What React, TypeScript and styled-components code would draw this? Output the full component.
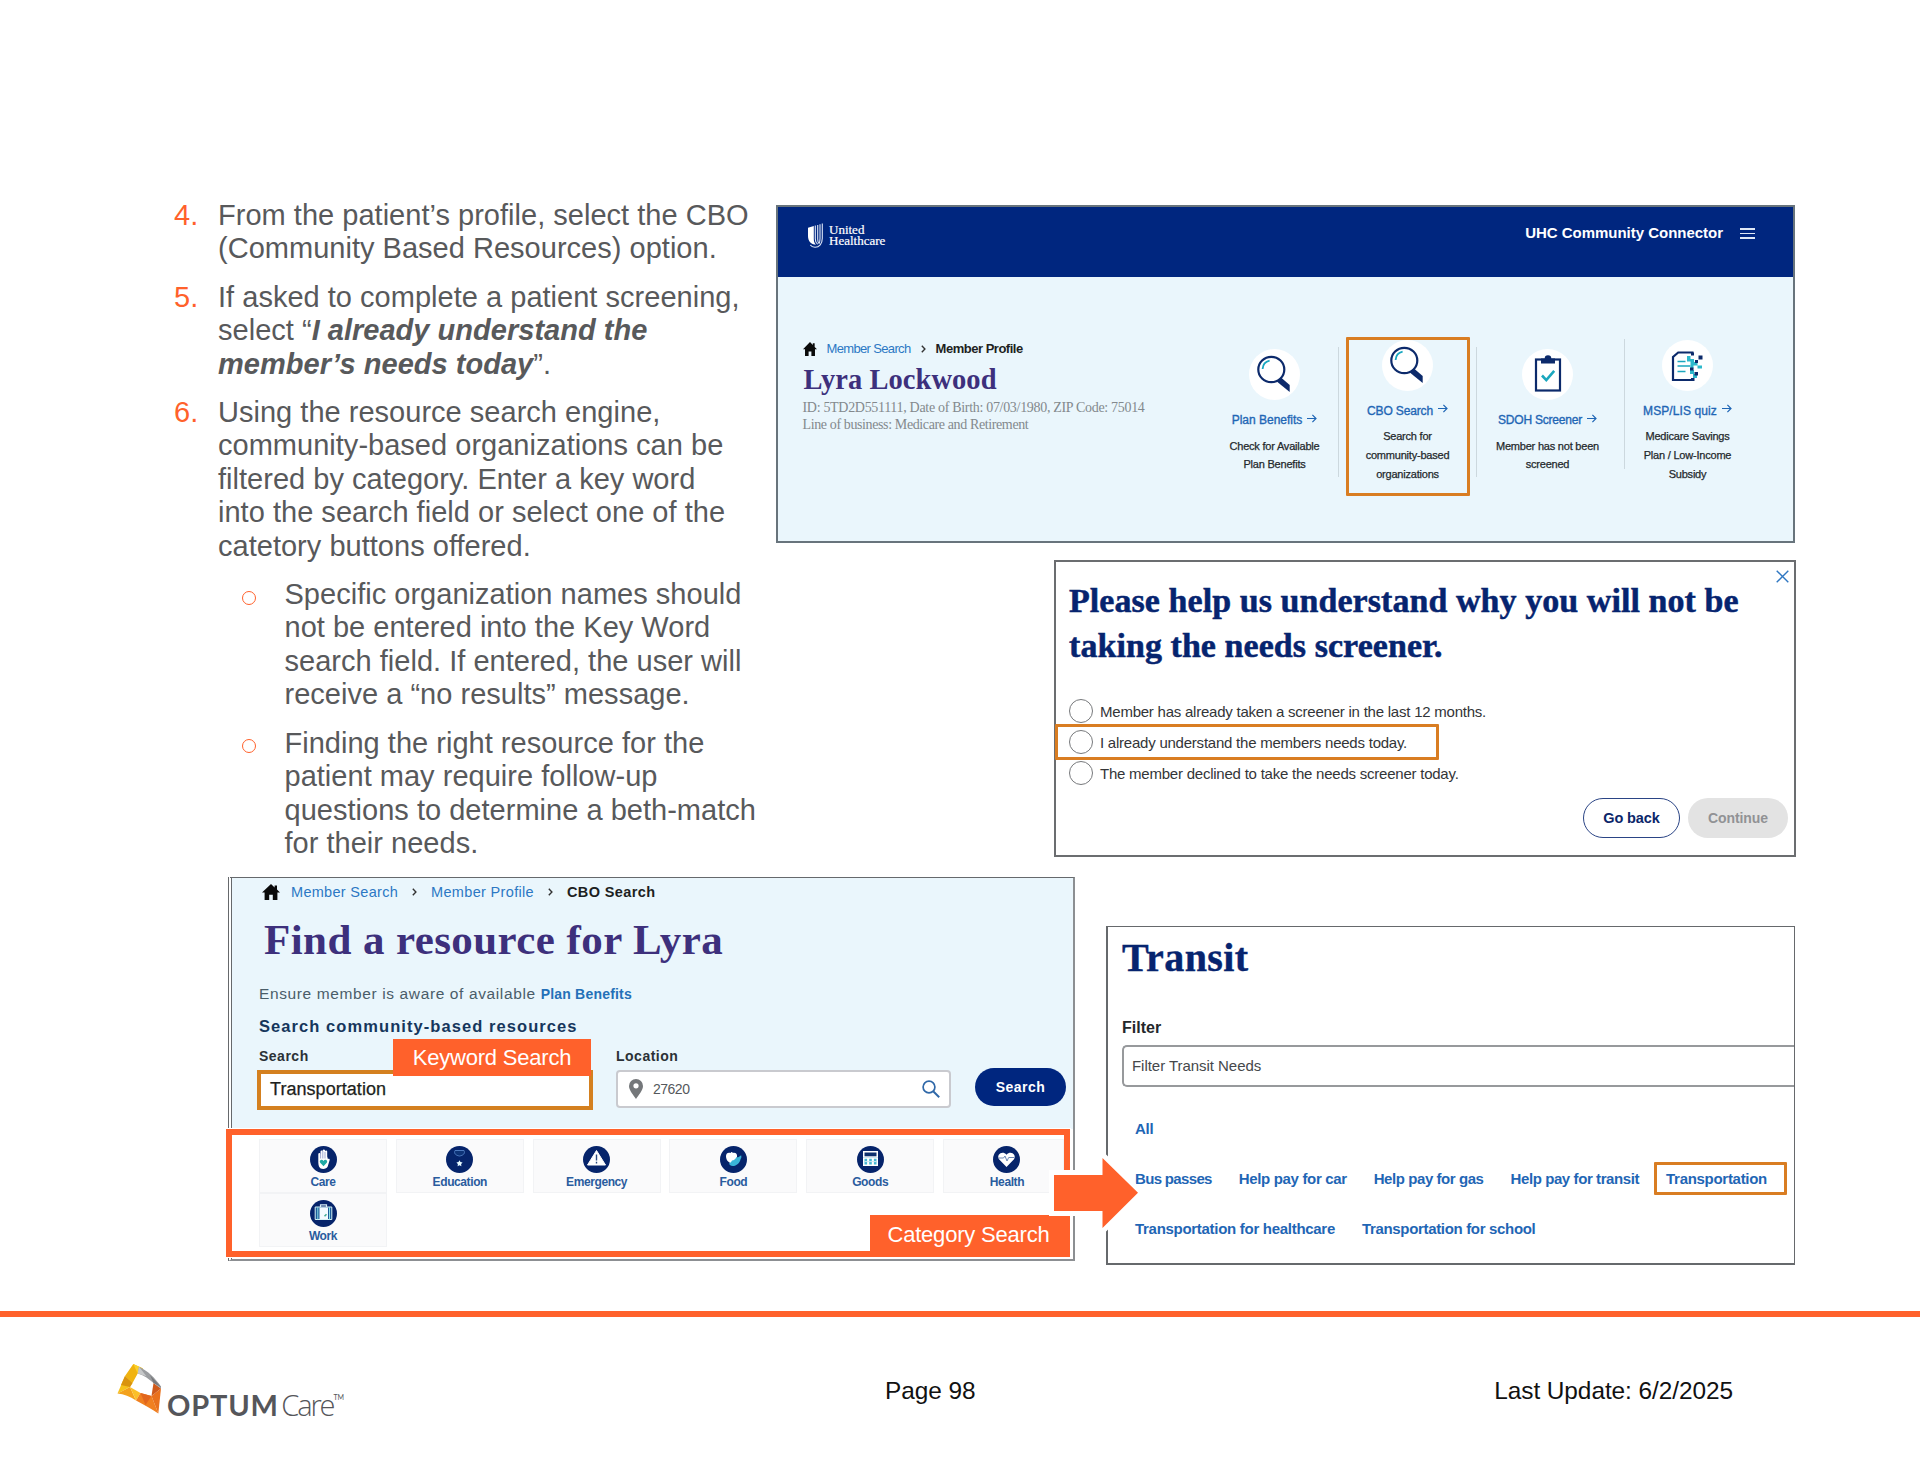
import React from 'react';
import styled, { createGlobalStyle, css } from 'styled-components';

const sans = '"Liberation Sans", Arial, sans-serif';
const serif = '"Liberation Serif", "Times New Roman", serif';

const color = {
  orange: '#ff612b',
  callout: '#d97d22',
  navy: '#00267f',
  heading: '#06246f',
  purple: '#3d307c',
  link: '#1f66b5',
  sky: '#eaf6fc',
  body: '#58595b',
};

const GlobalStyle = createGlobalStyle`
  * { box-sizing: border-box; }
  body { margin: 0; background: #fff; font-family: ${sans}; }
  p, h1, h2, ol, ul { margin: 0; padding: 0; font-weight: inherit; list-style: none; }
`;

const Page = styled.main`
  width: 1920px;
  height: 1484px;
  display: flex;
  flex-direction: column;
  background: #fff;
  overflow: hidden;
`;

const TopRow = styled.div`
  display: flex;
  height: 877px;
  padding-left: 174px;
`;

/* ---------- instructions ---------- */

const Steps = styled.ol`
  display: flex;
  flex-direction: column;
  gap: 15px;
  width: 602px;
  padding-top: 199px;
  font-size: 29px;
  line-height: 33.4px;
  letter-spacing: 0.02px;
  color: ${color.body};
`;

const Step = styled.li`
  display: grid;
  grid-template-columns: 44px 1fr;
`;

const StepNumber = styled.span`
  color: ${color.orange};
`;

const Line = styled.span`
  display: block;
  white-space: nowrap;
`;

const Strong = styled.strong`
  font-style: italic;
`;

const SubSteps = styled.ul`
  display: flex;
  flex-direction: column;
  gap: 15px;
  padding-left: 68px;
`;

const SubStep = styled.li`
  display: grid;
  grid-template-columns: 42.5px 1fr;
`;

const Bullet = styled.span`
  width: 14px;
  height: 14px;
  margin-top: 12.5px;
  border: 1.5px solid ${color.orange};
  border-radius: 50%;
`;

/* ---------- shared ---------- */

const Shots = styled.div`
  display: flex;
  flex-direction: column;
  align-items: flex-end;
  gap: 17px;
  width: 1020px;
  padding-top: 205px;
`;

const Trail = styled.nav<{ $gap: number }>`
  display: flex;
  align-items: center;
  gap: ${(p) => p.$gap}px;
  height: 16px;
`;

const Crumb = styled.span<{ $size: number; $spacing: number; $current?: boolean }>`
  font-size: ${(p) => p.$size}px;
  line-height: 16px;
  letter-spacing: ${(p) => p.$spacing}px;
  white-space: nowrap;
  color: ${(p) => (p.$current ? '#1d1f22' : '#2c78c4')};
  font-weight: ${(p) => (p.$current ? 700 : 400)};
`;

const callout = css`
  position: relative;
  &::after {
    content: '';
    position: absolute;
    border: 3px solid ${color.callout};
    border-radius: 1px;
    pointer-events: none;
  }
`;

/* ---------- member profile ---------- */

const ProfilePanel = styled.section`
  width: 1019px;
  height: 338px;
  margin-right: 1px;
  border: 2px solid #68747c;
  background: ${color.sky};
`;

const ProfileHeader = styled.header`
  display: flex;
  align-items: flex-start;
  height: 70px;
  padding: 16px 38px 0 30px;
  background: ${color.navy};
  color: #fff;
`;

const Brand = styled.div`
  display: flex;
  gap: 6px;
`;

const BrandName = styled.div`
  padding-top: 1px;
  font: 400 13px/11.4px ${serif};
  -webkit-text-stroke: 0.2px #fff;
`;

const AppName = styled.div`
  margin: 0.5px 17px 0 auto;
  font-size: 15px;
  font-weight: 700;
  line-height: 18px;
  letter-spacing: -0.02px;
`;

const MenuIcon = styled.div`
  display: flex;
  flex-direction: column;
  gap: 3px;
  width: 15px;
  margin-top: 5px;
  i {
    height: 1.5px;
    background: #dfe8f6;
  }
`;

const ProfileBody = styled.div`
  display: flex;
  justify-content: space-between;
  padding-left: 24.5px;
`;

const Identity = styled.div`
  padding-top: 64px;
`;

const MemberName = styled.h1`
  margin: 6px 0 3px 1px;
  font: 700 28.5px/34px ${serif};
  letter-spacing: 0.05px;
  color: ${color.purple};
`;

const Detail = styled.p<{ $spacing: number }>`
  font: 400 14px/16.5px ${serif};
  letter-spacing: ${(p) => p.$spacing}px;
  white-space: nowrap;
  color: #83898d;
`;

const Actions = styled.div`
  display: flex;
  align-items: flex-start;
  padding: 62px 43px 0 0;
`;

const Divider = styled.span<{ $rise?: number }>`
  width: 1px;
  height: 130px;
  margin-top: ${(p) => 8 - (p.$rise ?? 0)}px;
  background: #ccd8de;
`;

const Action = styled.div<{ $width: number; $drop: number; $shift?: number; $marked?: boolean }>`
  display: flex;
  flex-direction: column;
  align-items: center;
  width: ${(p) => p.$width}px;
  padding-top: ${(p) => p.$drop}px;
  padding-right: ${(p) => p.$shift ?? 0}px;
  ${(p) =>
    p.$marked &&
    css`
      ${callout}
      &::after {
        inset: -2px 6px -12px 7px;
      }
    `}
`;

const Disc = styled.div`
  width: 51px;
  height: 51px;
  border-radius: 50%;
  background: #fff;
  svg {
    display: block;
  }
`;

const ActionLink = styled.div<{ $spacing: number }>`
  display: flex;
  align-items: center;
  gap: 5px;
  margin-top: 12px;
  font-size: 12px;
  line-height: 16px;
  letter-spacing: ${(p) => p.$spacing}px;
  white-space: nowrap;
  color: ${color.link};
  -webkit-text-stroke: 0.35px ${color.link};
  svg {
    margin-top: -4px;
  }
`;

const ActionText = styled.p`
  margin-top: 8.7px;
  font-size: 11px;
  line-height: 18.8px;
  letter-spacing: -0.21px;
  text-align: center;
  color: #24292c;
  -webkit-text-stroke: 0.25px #24292c;
`;

/* ---------- screener dialog ---------- */

const Dialog = styled.section`
  position: relative;
  width: 742px;
  height: 297px;
  padding-top: 16px;
  border: 2px solid #6b6d70;
`;

const Close = styled.div`
  position: absolute;
  top: 8px;
  right: 5px;
  line-height: 0;
`;

const DialogTitle = styled.h2`
  margin: 0 0 27px 13px;
  font: 700 34px/45.3px ${serif};
  letter-spacing: 0.06px;
  color: ${color.heading};
  -webkit-text-stroke: 0.5px ${color.heading};
`;

const Choice = styled.div<{ $marked?: boolean }>`
  display: flex;
  align-items: center;
  gap: 7px;
  width: 383px;
  height: 31px;
  padding-left: 13px;
  font-size: 15px;
  letter-spacing: -0.23px;
  white-space: nowrap;
  color: #333538;
  ${(p) =>
    p.$marked &&
    css`
      ${callout}
      &::after {
        inset: -3px 0 -2px -1px;
      }
    `}
`;

const Radio = styled.span`
  flex: none;
  width: 24px;
  height: 24px;
  border: 1.5px solid #77797c;
  border-radius: 50%;
`;

const DialogButtons = styled.div`
  display: flex;
  justify-content: flex-end;
  gap: 8px;
  padding: 9px 6px 0 0;
`;

const Pill = styled.button<{ $kind: 'outline' | 'disabled' | 'primary'; $width: number }>`
  width: ${(p) => p.$width}px;
  height: ${(p) => (p.$kind === 'primary' ? 38 : 40)}px;
  padding: 0;
  border: ${(p) => (p.$kind === 'outline' ? '1px solid #2a4485' : '0')};
  border-radius: 20px;
  background: ${(p) => ({ outline: '#fff', disabled: '#e3e3e3', primary: color.navy })[p.$kind]};
  color: ${(p) => ({ outline: '#0b2669', disabled: '#919295', primary: '#fff' })[p.$kind]};
  font: 700 ${(p) => (p.$kind === 'outline' ? 14.5 : 14)}px/18px ${sans};
  letter-spacing: ${(p) => (p.$kind === 'primary' ? 0.5 : -0.1)}px;
`;

/* ---------- resource search ---------- */

const BottomRow = styled.div`
  display: flex;
  align-items: flex-start;
  height: 434px;
  padding-left: 228px;
`;

const ResourcePanel = styled.section`
  position: relative;
  z-index: 1;
  width: 847px;
  height: 384px;
  border: solid #66696c;
  border-width: 1px 2px 2px 4px;
  border-left-style: double;
  border-right-color: #8c8f92;
  border-bottom-color: #8c8f92;
`;

const ResourceTop = styled.div`
  height: 251px;
  padding: 6px 0 0 27px;
  background: ${color.sky};
`;

const TrailIndent = styled.div`
  padding-left: 3px;
  svg:first-child {
    margin-right: -3px;
  }
`;

const ResourceTitle = styled.h1`
  margin: 15px 0 20px 5px;
  font: 700 43px/50px ${serif};
  letter-spacing: 0.42px;
  color: ${color.purple};
`;

const Reminder = styled.p`
  font-size: 15.5px;
  line-height: 18px;
  letter-spacing: 0.62px;
  color: #4a5d69;
`;

const InlineLink = styled.a`
  font-size: 14px;
  font-weight: 700;
  letter-spacing: 0.2px;
  color: #2470b8;
`;

const FormTitle = styled.p`
  margin: 14px 0 12.5px;
  font-size: 16.5px;
  font-weight: 700;
  line-height: 18px;
  letter-spacing: 1.07px;
  color: #16365c;
`;

const Form = styled.div`
  display: flex;
  align-items: flex-start;
`;

const Field = styled.div<{ $width: number }>`
  position: relative;
  width: ${(p) => p.$width}px;
`;

const Label = styled.div`
  margin-bottom: 6px;
  font-size: 14px;
  font-weight: 700;
  line-height: 16px;
  letter-spacing: 0.5px;
  color: #2b3136;
`;

const KeywordInput = styled.div`
  display: flex;
  align-items: center;
  width: 336px;
  height: 40px;
  margin-left: -2px;
  padding-left: 9px;
  border: 4px solid #d4801f;
  background: #fff;
  font-size: 18px;
  letter-spacing: 0.05px;
  color: #1d1f20;
  -webkit-text-stroke: 0.25px #1d1f20;
`;

const LocationInput = styled.div`
  display: flex;
  align-items: center;
  width: 335px;
  height: 38px;
  padding: 0 9px 0 11px;
  border: 2px solid #c9cacf;
  border-radius: 4px;
  background: #fff;
  font-size: 14px;
  letter-spacing: -0.5px;
  color: #55585c;
  span {
    flex: 1;
    padding-left: 10px;
  }
`;

const ButtonSlot = styled.div`
  padding: 20px 0 0 24px;
`;

const Tag = styled.div<{ $width: number; $height: number }>`
  position: absolute;
  display: flex;
  align-items: center;
  justify-content: center;
  width: ${(p) => p.$width}px;
  height: ${(p) => p.$height}px;
  background: ${color.orange};
  color: #fff;
  font-size: 22px;
  letter-spacing: -0.2px;
  white-space: nowrap;
`;

const KeywordTag = styled(Tag)`
  top: -9px;
  left: 134px;
  padding-top: 2px;
`;

const CategoryTag = styled(Tag)`
  right: -6px;
  bottom: -6px;
  padding: 0 3px 2px 0;
`;

const Categories = styled.div`
  position: relative;
  display: grid;
  grid-template-columns: repeat(6, 128px);
  grid-auto-rows: 54px;
  column-gap: 8.8px;
  width: 844px;
  height: 128px;
  margin-left: -6px;
  padding: 4px 0 0 27px;
  border: 6px solid ${color.orange};
  outline: 1px solid #fff;
  background: #fff;
`;

const Category = styled.div<{ $clipped?: boolean }>`
  display: flex;
  flex-direction: column;
  align-items: center;
  gap: 2px;
  width: ${(p) => (p.$clipped ? 121 : 128)}px;
  padding: 6px 0 0 ${(p) => (p.$clipped ? 7 : 0)}px;
  border: 1px solid #f2f3f5;
  background: #fafafb;
  font-size: 12px;
  font-weight: 700;
  line-height: 14px;
  letter-spacing: -0.4px;
  color: #2a5c9e;
  svg {
    display: block;
  }
`;

const Arrow = styled.svg`
  position: absolute;
  left: 812px;
  top: 269px;
`;

/* ---------- transit ---------- */

const TransitPanel = styled.section`
  width: 689px;
  height: 339px;
  margin: 49px 0 0 31px;
  padding-top: 9px;
  border: 1px solid #66696c;
  border-width: 1px 1px 2px 2px;
`;

const TransitTitle = styled.h1`
  margin-left: 14px;
  font: 700 40px/44px ${serif};
  letter-spacing: 0.4px;
  color: ${color.heading};
  -webkit-text-stroke: 0.4px ${color.heading};
`;

const FilterLabel = styled.div`
  margin: 38.5px 0 8.5px 14px;
  font-size: 16px;
  font-weight: 700;
  line-height: 18px;
  color: #24272a;
`;

const FilterInput = styled.div`
  display: flex;
  align-items: center;
  height: 42px;
  margin-left: 14px;
  padding: 0 0 2px 8px;
  border: 2px solid #97999c;
  border-right: 0;
  border-radius: 5px 0 0 5px;
  font-size: 15px;
  letter-spacing: -0.04px;
  color: #45484b;
`;

const Needs = styled.div`
  display: flex;
  flex-direction: column;
  gap: 32px;
  padding: 32.5px 0 0 27px;
`;

const NeedRow = styled.div`
  display: flex;
  gap: 27px;
`;

const Need = styled.a<{ $spacing: number; $marked?: boolean }>`
  font-size: 15px;
  font-weight: 700;
  line-height: 18px;
  letter-spacing: ${(p) => p.$spacing}px;
  white-space: nowrap;
  color: ${color.link};
  ${(p) =>
    p.$marked &&
    css`
      ${callout}
      &::after {
        inset: -8px -19.5px -7px -12px;
      }
    `}
`;

/* ---------- footer ---------- */

const Rule = styled.div`
  height: 6px;
  background: ${color.orange};
`;

const Footer = styled.footer`
  display: flex;
  align-items: flex-start;
  padding: 46px 187px 0 117px;
`;

const Logo = styled.div`
  display: flex;
  width: 768px;
`;

const Wordmark = styled.div`
  display: flex;
  margin: 26.5px 0 0 3px;
  font-family: Lato, sans-serif;
  line-height: 30px;
  color: #55565a;
`;

const WordBold = styled.span`
  font-size: 29px;
  font-weight: 700;
  letter-spacing: 0.8px;
`;

const WordLight = styled.span`
  margin-left: 2.5px;
  font: 300 29px/30px "Open Sans", sans-serif;
  letter-spacing: -2.1px;
`;

const TradeMark = styled.span`
  font-size: 7px;
  line-height: 14px;
`;

const FooterText = styled.span`
  margin-top: 12.5px;
  font-size: 24.4px;
  line-height: 30px;
  letter-spacing: -0.06px;
  color: #111;
`;

const LastUpdate = styled(FooterText)`
  margin-left: auto;
`;

/* ---------- icons ---------- */

const HomeIcon = ({ width, height }: { width: number; height: number }) => (
  <svg width={width} height={height} viewBox="0 0 18 16" preserveAspectRatio="none">
    <path d="M9 0 0 8.4h2.6V16h4.6v-5.2h3.600V16h4.600V8.4H18l-3-2.8V1.4h-2.4v2z" fill="#0a0a0a" />
  </svg>
);

const Chevron = () => (
  <svg width="5" height="8" viewBox="0 0 5 8">
    <path d="M.8.8 3.9 4 .8 7.2" fill="none" stroke="#333" strokeWidth="1.4" />
  </svg>
);

const RightArrow = () => (
  <svg width="10" height="9" viewBox="0 0 10 9">
    <path d="M0 4.5h9M5.4.9 9 4.5 5.4 8.1" fill="none" stroke={color.link} strokeWidth="1.2" />
  </svg>
);

const Shield = () => (
  <svg width="15" height="26" viewBox="0 0 15 26">
    <path d="M0 4.800 5.800 3V16c0 2.500.7 4.200 2.200 5.600C3 21.500 0 18 0 13z" fill="#fff" />
    <path
      d="M7.300 2.600V16c0 2.400.9 4.200 2.300 5.200M9.700 1.900V16c0 2.400.6 3.800 1.400 4.600M12 1.200v14.300c0 2.400-.2 3.600-.8 5M14.300.5v14.800c0 5.400-3 8.900-7.300 9-2.200-.2-3.700-1-4.700-2.300"
      fill="none"
      stroke="#dfe8f8"
      strokeWidth="1.100"
    />
  </svg>
);

const LensIcon = () => (
  <svg width="51" height="51" viewBox="0 0 51 51">
    <ellipse cx="22.300" cy="20.500" rx="13" ry="12.700" fill="none" stroke="#0c2a6b" strokeWidth="2.200" />
    <path d="M13.600 20c.3-4.500 3-7.400 7-8.300" fill="none" stroke="#18a7c0" strokeWidth="1.800" />
    <path d="M27.800 32.500 32 28.500l8.700 7.500v7z" fill="#0c2a6b" />
  </svg>
);

const ClipboardIcon = () => (
  <svg width="51" height="51" viewBox="0 0 51 51">
    <rect x="14" y="10.500" width="24" height="31" fill="none" stroke="#0c2a6b" strokeWidth="2.200" />
    <path d="M19 9.500h3.700a3.300 3.300 0 0 1 6.600 0H33v5H19z" fill="#0c2a6b" />
    <path d="m20 26.500 4.300 4.600 7.900-9.200" fill="none" stroke="#1ba7be" strokeWidth="2.600" />
  </svg>
);

const QuizIcon = () => (
  <svg width="51" height="51" viewBox="0 0 51 51">
    <path d="M31.500 12.500H16.200L11 17v23h21" fill="none" stroke="#0c2a6b" strokeWidth="2.200" />
    <path d="M15.500 21.500h8M15.500 26h13M15.500 31.500h8" stroke="#1ba7be" strokeWidth="1.700" />
    <path
      d="M25 16h3.500v3h3.500v3h3.500v3.500H40v3h-4.500v-3h-4v3h-3v-7H25zM28 30h4v4h3v4h-4v-4h-3z"
      fill="#2db9cc"
    />
    <path d="M36.500 15.500h4v4h-4zM29 12.500h3v3h-3zM33 20h3v3h-3zM28 27.500h3.500v3H28zM32.500 32H36v3.500h-3.500zM29 38h3.500v3H29z" fill="#0c2a6b" />
  </svg>
);

const CloseIcon = () => (
  <svg width="13" height="13" viewBox="0 0 13 13">
    <path d="m.7.700 11.600 11.600M12.300.7.700 12.300" stroke="#2f77c2" strokeWidth="1.400" />
  </svg>
);

const PinIcon = () => (
  <svg width="14" height="20" viewBox="0 0 14 20">
    <path d="M7 0a7 7 0 0 0-7 7c0 4.500 4.500 9 7 13 2.500-4 7-8.500 7-13a7 7 0 0 0-7-7z" fill="#74777a" />
    <circle cx="7" cy="6.800" r="2.600" fill="#fff" />
  </svg>
);

const SearchIcon = () => (
  <svg width="18" height="18" viewBox="0 0 18 18">
    <circle cx="7" cy="7" r="5.900" fill="none" stroke="#2f68a8" strokeWidth="1.700" />
    <path d="m11.200 11.200 6 6" stroke="#2f68a8" strokeWidth="2" />
  </svg>
);

const glyphs: Record<string, React.ReactNode> = {
  Care: (
    <>
      <path
        d="M8.300 13V8.200a1.100 1.100 0 0 1 2.200 0V5.500a1.100 1.100 0 0 1 2.200 0V4.300a1.200 1.200 0 0 1 2.300 0v1.300a1.100 1.100 0 0 1 2.200 0v4.900l.7 2.600c1-.8 2.200-.2 1.700 1.100l-1.900 6.300c-1 3-7.300 3.600-8.700 0-.8-2.200-.7-5-.7-7.500z"
        fill="#fff"
      />
      <path d="M10.600 6v6.500M12.800 5v7.500M15 6v6.500" stroke="#7a86c0" strokeWidth=".7" />
      <path d="m13.500 20.300-3.300-3.500c-1.600-2.300 1.700-4.300 3.300-1.900 1.600-2.400 4.900-.4 3.300 1.900z" fill="#1fa9a5" />
    </>
  ),
  Education: (
    <>
      <path d="M9 4.500h9c1.500 3-1 5-4.500 5.500C10 9.500 7.500 7.500 9 4.500z" fill="#0d3378" stroke="#4d79bf" strokeWidth="1" />
      <path d="m13.500 14.200 1 1.900 2.100.4-1.500 1.500.3 2.200-1.900-.9-1.900.9.300-2.200-1.500-1.500 2.100-.4z" fill="#e8fbff" />
    </>
  ),
  Emergency: (
    <>
      <path d="M13.500 4.500 22.500 19h-18z" fill="#fff" stroke="#fff" strokeLinejoin="round" />
      <path d="M13.500 8.500v6M13.500 15.800v1.600" stroke="#2a4a80" strokeWidth="1.400" />
    </>
  ),
  Food: (
    <>
      <path d="M6 10c0-3 2.500-4 4.500-3 .5-1.500 2-1.500 2.300 0 2.500-.8 4.700.8 4.200 3.700-.5 3.300-2.500 6-5.500 6.600C8 16.500 6 13.500 6 10z" fill="#fff" />
      <path d="M12 14.500c2-.2 3.400-1.700 4.400-3.300 1.600.6 3-.8 4.700-2 .5 1.400.4 2.700-.5 3.800-.7 3.800-4.100 7.100-7.800 7.100-2.300-.1-3.200-1.100-3.800-2.600 1.300-.6 2.400-1.500 3-3z" fill="#3ab4d8" />
    </>
  ),
  Goods: (
    <>
      <path d="M6 5h15v15H6z" fill="#fff" />
      <path d="M7.500 6.500h12v3.800h-12z" fill="#0d2f6e" />
      <path d="M7.500 12.700h2.600v5.800H7.500zM12.200 12.700h2.600v5.800h-2.600zM16.900 12.700h2.600v5.800h-2.600z" fill="#45b7d4" />
      <path d="M6 11.500h15M7.500 15.600h12" stroke="#cfe6f2" />
    </>
  ),
  Health: (
    <>
      <path d="M13.500 21 6 13.200C3 8.800 9.500 4 13.500 8.800 17.500 4 24 8.800 21 13.200z" fill="#fff" />
      <path d="M5.500 12h5l1.500-2 2 5 1.700-3.500h5.500" fill="none" stroke="#5c7cad" strokeWidth=".9" />
    </>
  ),
  Work: (
    <>
      <path d="M10.500 7V4.800h6V7" fill="none" stroke="#d8eef6" strokeWidth="1.200" />
      <path d="M5.200 7h16.600v12.500H5.200z" fill="#1c5c9b" stroke="#d8f2f5" />
      <path d="M9.500 7.500h8.500v11.500H9.500z" fill="#f4fbff" />
      <path d="M7.800 7v12.500M19.500 7v12.500" stroke="#8fe0e3" />
      <path d="m14.500 16.200 2-2" stroke="#46ad98" strokeWidth="1.600" />
    </>
  ),
};

const CategoryIcon = ({ name }: { name: string }) => (
  <svg width="27" height="27" viewBox="0 0 27 27">
    <circle cx="13.500" cy="13.500" r="13.500" fill="#06246b" />
    {glyphs[name]}
  </svg>
);

const OptumMark = () => (
  <svg width="47" height="52" viewBox="0 0 47 52">
    <path d="M16.300 1 8 13l7.500 7 5.200-9.500L26 5.500z" fill="#f0b310" />
    <path d="M16.300 1 26 5.500l-5.300 5z" fill="#fbd028" />
    <path d="M8 13 .5 30.500 13 24l2.500-4z" fill="#f6c21c" />
    <path d="M8 13 4 22l9 2 2.500-4z" fill="#d9930f" />
    <path d="M.5 30.500 13 24l6 13.500C13 33.500 7 31.300.5 30.500z" fill="#f3a21d" />
    <path d="M13 24l10.500 6L19 37.500z" fill="#fbc02a" />
    <path d="m23.500 30 11 3L41.300 50.500C35 46 27 42 19 37.500z" fill="#f08020" />
    <path d="m23.500 30 11 3-6 9z" fill="#e2661d" />
    <path d="M34.500 33 44 25.500l-2.700 25z" fill="#e9711c" />
    <path d="M36.500 20 44 25.500 34.500 33z" fill="#cf5a1b" />
    <path d="M22 3.800C31 8 38 15 44 23.500v2L36.500 20c-4.500-4-9-7.300-15.800-9.500z" fill="#9b9da0" />
    <path d="m22 3.800 7.500 9.400-8.800-2.700z" fill="#c6c8c9" />
    <path d="m33 12 3.500 8 7.500 4z" fill="#77797c" />
  </svg>
);

/* ---------- data ---------- */

const choices = [
  { text: 'Member has already taken a screener in the last 12 months.' },
  { text: 'I already understand the members needs today.', marked: true },
  { text: 'The member declined to take the needs screener today.' },
];

const categories = ['Care', 'Education', 'Emergency', 'Food', 'Goods', 'Health', 'Work'];

const needRows: { text: string; spacing: number; marked?: boolean }[][] = [
  [{ text: 'All', spacing: -0.3 }],
  [
    { text: 'Bus passes', spacing: -0.66 },
    { text: 'Help pay for car', spacing: -0.34 },
    { text: 'Help pay for gas', spacing: -0.43 },
    { text: 'Help pay for transit', spacing: -0.41 },
    { text: 'Transportation', spacing: -0.29, marked: true },
  ],
  [
    { text: 'Transportation for healthcare', spacing: -0.29 },
    { text: 'Transportation for school', spacing: -0.33 },
  ],
];

/* ---------- sections ---------- */

const Lines = ({ items }: { items: React.ReactNode[] }) => (
  <div>
    {items.map((item, i) => (
      <Line key={i}>{item}</Line>
    ))}
  </div>
);

const Instructions = () => (
  <Steps>
    <Step>
      <StepNumber>4.</StepNumber>
      <Lines items={['From the patient’s profile, select the CBO', '(Community Based Resources) option.']} />
    </Step>
    <Step>
      <StepNumber>5.</StepNumber>
      <Lines
        items={[
          'If asked to complete a patient screening,',
          <>select “<Strong>I already understand the</Strong></>,
          <><Strong>member’s needs today</Strong>”.</>,
        ]}
      />
    </Step>
    <Step>
      <StepNumber>6.</StepNumber>
      <Lines
        items={[
          'Using the resource search engine,',
          'community-based organizations can be',
          'filtered by category. Enter a key word',
          'into the search field or select one of the',
          'catetory buttons offered.',
        ]}
      />
    </Step>
    <SubSteps>
      <SubStep>
        <Bullet />
        <Lines
          items={[
            'Specific organization names should',
            'not be entered into the Key Word',
            'search field. If entered, the user will',
            'receive a “no results” message.',
          ]}
        />
      </SubStep>
      <SubStep>
        <Bullet />
        <Lines
          items={[
            'Finding the right resource for the',
            'patient may require follow-up',
            'questions to determine a beth-match',
            'for their needs.',
          ]}
        />
      </SubStep>
    </SubSteps>
  </Steps>
);

const Profile = () => (
  <ProfilePanel>
    <ProfileHeader>
      <Brand>
        <Shield />
        <BrandName>
          United
          <br />
          Healthcare
        </BrandName>
      </Brand>
      <AppName>UHC Community Connector</AppName>
      <MenuIcon>
        <i />
        <i />
        <i />
      </MenuIcon>
    </ProfileHeader>
    <ProfileBody>
      <Identity>
        <Trail $gap={10}>
          <HomeIcon width={14} height={14} />
          <Crumb $size={13} $spacing={-0.65}>Member Search</Crumb>
          <Chevron />
          <Crumb $size={13} $spacing={-0.48} $current>Member Profile</Crumb>
        </Trail>
        <MemberName>Lyra Lockwood</MemberName>
        <Detail $spacing={-0.31}>ID: 5TD2D551111, Date of Birth: 07/03/1980, ZIP Code: 75014</Detail>
        <Detail $spacing={-0.38}>Line of business: Medicare and Retirement</Detail>
      </Identity>
      <Actions>
        <Action $width={127} $drop={10}>
          <Disc><LensIcon /></Disc>
          <ActionLink $spacing={0}>Plan Benefits <RightArrow /></ActionLink>
          <ActionText>Check for Available<br />Plan Benefits</ActionText>
        </Action>
        <Divider />
        <Action $width={137} $drop={0.5} $marked>
          <Disc><LensIcon /></Disc>
          <ActionLink $spacing={-0.15}>CBO Search <RightArrow /></ActionLink>
          <ActionText>Search for<br />community-based<br />organizations</ActionText>
        </Action>
        <Divider />
        <Action $width={147} $drop={10} $shift={6}>
          <Disc><ClipboardIcon /></Disc>
          <ActionLink $spacing={-0.22}>SDOH Screener <RightArrow /></ActionLink>
          <ActionText>Member has not been<br />screened</ActionText>
        </Action>
        <Divider $rise={8} />
        <Action $width={125} $drop={0.5}>
          <Disc><QuizIcon /></Disc>
          <ActionLink $spacing={0.1}>MSP/LIS quiz <RightArrow /></ActionLink>
          <ActionText>Medicare Savings<br />Plan / Low-Income<br />Subsidy</ActionText>
        </Action>
      </Actions>
    </ProfileBody>
  </ProfilePanel>
);

const Screener = () => (
  <Dialog>
    <Close><CloseIcon /></Close>
    <DialogTitle>
      Please help us understand why you will not be
      <br />
      taking the needs screener.
    </DialogTitle>
    {choices.map((c) => (
      <Choice key={c.text} $marked={c.marked}>
        <Radio />
        {c.text}
      </Choice>
    ))}
    <DialogButtons>
      <Pill $kind="outline" $width={97}>Go back</Pill>
      <Pill $kind="disabled" $width={100}>Continue</Pill>
    </DialogButtons>
  </Dialog>
);

const ResourceSearch = () => (
  <ResourcePanel>
    <ResourceTop>
      <TrailIndent>
        <Trail $gap={14}>
          <HomeIcon width={18} height={16} />
          <Crumb $size={14.5} $spacing={0.3}>Member Search</Crumb>
          <Chevron />
          <Crumb $size={14.5} $spacing={0.33}>Member Profile</Crumb>
          <Chevron />
          <Crumb $size={14.5} $spacing={0.38} $current>CBO Search</Crumb>
        </Trail>
      </TrailIndent>
      <ResourceTitle>Find a resource for Lyra</ResourceTitle>
      <Reminder>
        Ensure member is aware of available <InlineLink>Plan Benefits</InlineLink>
      </Reminder>
      <FormTitle>Search community-based resources</FormTitle>
      <Form>
        <Field $width={357}>
          <Label>Search</Label>
          <KeywordInput>Transportation</KeywordInput>
          <KeywordTag $width={198} $height={37}>Keyword Search</KeywordTag>
        </Field>
        <Field $width={335}>
          <Label>Location</Label>
          <LocationInput>
            <PinIcon />
            <span>27620</span>
            <SearchIcon />
          </LocationInput>
        </Field>
        <ButtonSlot>
          <Pill $kind="primary" $width={91}>Search</Pill>
        </ButtonSlot>
      </Form>
    </ResourceTop>
    <Categories>
      {categories.map((name) => (
        <Category key={name} $clipped={name === 'Health'}>
          <CategoryIcon name={name} />
          {name}
        </Category>
      ))}
      <CategoryTag $width={200} $height={42}>Category Search</CategoryTag>
    </Categories>
    <Arrow width="100" height="92" viewBox="0 0 100 92">
      <path
        d="M10 28h48.500V11L94 45.700 58.500 81V64H10z"
        fill="#fff"
        stroke="#fff"
        strokeWidth="10"
      />
      <path d="M10 28h48.500V11L94 45.700 58.500 81V64H10z" fill={color.orange} />
    </Arrow>
  </ResourcePanel>
);

const Transit = () => (
  <TransitPanel>
    <TransitTitle>Transit</TransitTitle>
    <FilterLabel>Filter</FilterLabel>
    <FilterInput>Filter Transit Needs</FilterInput>
    <Needs>
      {needRows.map((row) => (
        <NeedRow key={row[0].text}>
          {row.map((n) => (
            <Need key={n.text} $spacing={n.spacing} $marked={n.marked}>{n.text}</Need>
          ))}
        </NeedRow>
      ))}
    </Needs>
  </TransitPanel>
);

export default function App() {
  return (
    <>
      <GlobalStyle />
      <Page>
        <TopRow>
          <Instructions />
          <Shots>
            <Profile />
            <Screener />
          </Shots>
        </TopRow>
        <BottomRow>
          <ResourceSearch />
          <Transit />
        </BottomRow>
        <Rule />
        <Footer>
          <Logo>
            <OptumMark />
            <Wordmark>
              <WordBold>OPTUM</WordBold>
              <WordLight>Care</WordLight>
              <TradeMark>TM</TradeMark>
            </Wordmark>
          </Logo>
          <FooterText>Page 98</FooterText>
          <LastUpdate>Last Update: 6/2/2025</LastUpdate>
        </Footer>
      </Page>
    </>
  );
}
